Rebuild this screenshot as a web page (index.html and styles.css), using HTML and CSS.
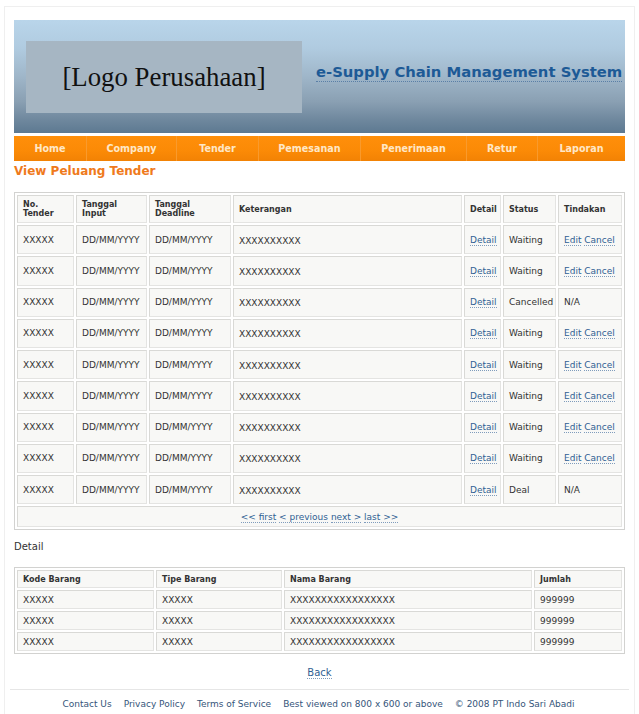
FILE: index.html
```html
<!DOCTYPE html>
<html lang="id">
<head>
<meta charset="utf-8">
<title>View Peluang Tender - e-Supply Chain Management System</title>
<link rel="stylesheet" href="styles.css">
</head>
<body>
<div class="page">
  <header class="masthead">
    <div class="logo">[Logo Perusahaan]</div>
    <a class="site-title" href="#">e-Supply Chain Management System</a>
  </header>

  <nav class="menu">
    <a href="#">Home</a>
    <a href="#">Company</a>
    <a href="#">Tender</a>
    <a href="#">Pemesanan</a>
    <a href="#">Penerimaan</a>
    <a href="#">Retur</a>
    <a href="#">Laporan</a>
  </nav>

  <h1 class="page-title">View Peluang Tender</h1>

  <table class="grid tender">
    <thead>
      <tr>
        <th class="w-no">No.<br>Tender</th>
        <th class="w-input">Tanggal<br>Input</th>
        <th class="w-deadline">Tanggal<br>Deadline</th>
        <th class="w-ket">Keterangan</th>
        <th class="w-detail">Detail</th>
        <th class="w-status">Status</th>
        <th class="w-aksi">Tindakan</th>
      </tr>
    </thead>
    <tbody>
      <tr><td>XXXXX</td><td>DD/MM/YYYY</td><td>DD/MM/YYYY</td><td class="ket">XXXXXXXXXX</td><td><a href="#">Detail</a></td><td>Waiting</td><td><a href="#">Edit</a> <a href="#">Cancel</a></td></tr>
      <tr><td>XXXXX</td><td>DD/MM/YYYY</td><td>DD/MM/YYYY</td><td class="ket">XXXXXXXXXX</td><td><a href="#">Detail</a></td><td>Waiting</td><td><a href="#">Edit</a> <a href="#">Cancel</a></td></tr>
      <tr><td>XXXXX</td><td>DD/MM/YYYY</td><td>DD/MM/YYYY</td><td class="ket">XXXXXXXXXX</td><td><a href="#">Detail</a></td><td>Cancelled</td><td>N/A</td></tr>
      <tr><td>XXXXX</td><td>DD/MM/YYYY</td><td>DD/MM/YYYY</td><td class="ket">XXXXXXXXXX</td><td><a href="#">Detail</a></td><td>Waiting</td><td><a href="#">Edit</a> <a href="#">Cancel</a></td></tr>
      <tr><td>XXXXX</td><td>DD/MM/YYYY</td><td>DD/MM/YYYY</td><td class="ket">XXXXXXXXXX</td><td><a href="#">Detail</a></td><td>Waiting</td><td><a href="#">Edit</a> <a href="#">Cancel</a></td></tr>
      <tr><td>XXXXX</td><td>DD/MM/YYYY</td><td>DD/MM/YYYY</td><td class="ket">XXXXXXXXXX</td><td><a href="#">Detail</a></td><td>Waiting</td><td><a href="#">Edit</a> <a href="#">Cancel</a></td></tr>
      <tr><td>XXXXX</td><td>DD/MM/YYYY</td><td>DD/MM/YYYY</td><td class="ket">XXXXXXXXXX</td><td><a href="#">Detail</a></td><td>Waiting</td><td><a href="#">Edit</a> <a href="#">Cancel</a></td></tr>
      <tr><td>XXXXX</td><td>DD/MM/YYYY</td><td>DD/MM/YYYY</td><td class="ket">XXXXXXXXXX</td><td><a href="#">Detail</a></td><td>Waiting</td><td><a href="#">Edit</a> <a href="#">Cancel</a></td></tr>
      <tr><td>XXXXX</td><td>DD/MM/YYYY</td><td>DD/MM/YYYY</td><td class="ket">XXXXXXXXXX</td><td><a href="#">Detail</a></td><td>Deal</td><td>N/A</td></tr>
      <tr class="pager"><td colspan="7"><a href="#">&lt;&lt; first</a> <a href="#">&lt; previous</a> <a href="#">next &gt;</a> <a href="#">last &gt;&gt;</a></td></tr>
    </tbody>
  </table>

  <h2 class="section-title">Detail</h2>

  <table class="grid items">
    <thead>
      <tr>
        <th class="w-kode">Kode Barang</th>
        <th class="w-tipe">Tipe Barang</th>
        <th class="w-nama">Nama Barang</th>
        <th class="w-jumlah">Jumlah</th>
      </tr>
    </thead>
    <tbody>
      <tr><td>XXXXX</td><td>XXXXX</td><td>XXXXXXXXXXXXXXXXX</td><td>999999</td></tr>
      <tr><td>XXXXX</td><td>XXXXX</td><td>XXXXXXXXXXXXXXXXX</td><td>999999</td></tr>
      <tr><td>XXXXX</td><td>XXXXX</td><td>XXXXXXXXXXXXXXXXX</td><td>999999</td></tr>
    </tbody>
  </table>

  <div class="back"><a href="#">Back</a></div>

  <footer class="footer">
    <a href="#">Contact Us</a>
    <a href="#">Privacy Policy</a>
    <a href="#">Terms of Service</a>
    <span>Best viewed on 800 x 600 or above</span>
    <span>&copy; 2008 PT Indo Sari Abadi</span>
  </footer>
</div>
</body>
</html>
```

FILE: styles.css
```css
html, body {
  margin: 0;
  padding: 0;
  background: #ffffff;
}

body {
  font-family: "DejaVu Sans", Verdana, sans-serif;
  font-size: 9px;
  color: #333333;
}

a {
  color: #2f5f93;
  text-decoration: none;
  border-bottom: 1px dotted #7f9cbc;
}

.page {
  margin: 6px 4px 0 4px;
  border: 1px solid #efefef;
  border-bottom: none;
  padding: 13px 9px 0 9px;
}

/* ---- masthead ---- */
.masthead {
  height: 113px;
  display: flex;
  align-items: flex-start;
  padding-left: 12px;
  background: linear-gradient(180deg, #b9d5ea 0%, #b0cbe0 25%, #9fb6c9 50%, #8aa0b3 72%, #6f889e 88%, #5d7991 100%);
}

.logo {
  margin-top: 21px;
  width: 276px;
  height: 72px;
  display: flex;
  align-items: center;
  justify-content: center;
  background: #a6b6c3;
  font-family: "Liberation Serif", "Times New Roman", serif;
  font-size: 26.8px;
  color: #111111;
}

.site-title {
  margin-top: 43px;
  margin-left: 14px;
  font-size: 14.8px;
  font-weight: bold;
  color: #1d5a96;
  border-bottom: 1px dotted #5a7fa6;
  line-height: 18px;
}

/* ---- main menu ---- */
.menu {
  margin-top: 3px;
  height: 25px;
  display: grid;
  grid-template-columns: 72px 90px 82px 102px 106px 71px 88px;
  background: linear-gradient(180deg, #ff8f0a 0%, #fb8a06 60%, #f28204 100%);
}

.menu a {
  display: flex;
  align-items: center;
  justify-content: center;
  border-bottom: none;
  border-left: 1px solid #f99a2c;
  color: #ffe7c6;
  font-weight: bold;
  font-size: 9.6px;
}

.menu a:first-child {
  border-left: none;
}

/* ---- headings ---- */
.page-title {
  margin: 3px 0 0 0;
  height: 28px;
  font-size: 12px;
  line-height: 15px;
  font-weight: bold;
  color: #ef7a1c;
}

.section-title {
  margin: 0;
  padding: 10px 0 0 0;
  height: 37px;
  box-sizing: border-box;
  font-size: 10px;
  line-height: 13px;
  font-weight: normal;
  color: #333333;
}

/* ---- data grids ---- */
.grid {
  width: 611px;
  table-layout: fixed;
  border-collapse: separate;
  border-spacing: 2px;
  border: 1px solid #d2d2d0;
  background: #ffffff;
}

.grid th,
.grid td {
  box-sizing: border-box;
  border: 1px solid #d9d9d6;
  border-right-color: #e4e4e2;
  border-bottom-color: #e4e4e2;
  background: #f8f8f6;
  text-align: left;
  vertical-align: middle;
  padding: 0 0 0 5px;
}

.grid th {
  font-size: 8px;
  font-weight: bold;
  line-height: 9px;
}

.tender th { height: 28px; }
.tender td { height: 29.25px; }
.tender td.ket { padding-top: 2px; }

.tender .pager td {
  height: 21px;
  text-align: center;
  padding: 0;
}

.w-no { width: 57px; }
.w-input { width: 71px; }
.w-deadline { width: 82px; }
.w-ket { width: 229px; }
.w-detail { width: 37px; }
.w-status { width: 53px; }
.w-aksi { width: 64px; }

.items th { height: 18px; }
.items td { height: 19px; }

.w-kode { width: 137px; }
.w-tipe { width: 126px; }
.w-nama { width: 248px; }
.w-jumlah { width: 88px; }

/* ---- footer ---- */
.back {
  margin-top: 12px;
  text-align: center;
  font-size: 10px;
  line-height: 13px;
}

.footer {
  margin-top: 10px;
  margin-left: -4px;
  margin-right: -4px;
  border-top: 1px solid #e6e6e6;
  height: 28px;
  display: flex;
  align-items: center;
  justify-content: center;
  gap: 12px;
  padding-right: 2px;
  font-size: 9px;
  color: #35557a;
}

.footer a {
  border-bottom: none;
  color: #35557a;
}
```
